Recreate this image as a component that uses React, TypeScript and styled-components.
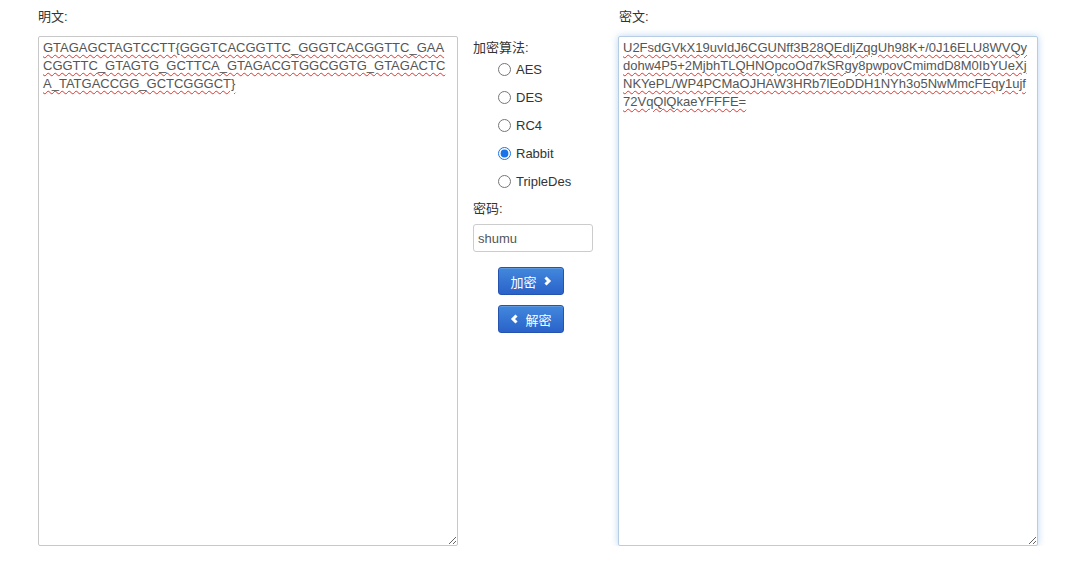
import React, { useState } from 'react';
import styled, { createGlobalStyle } from 'styled-components';

const GlobalStyle = createGlobalStyle`
  html, body {
    margin: 0;
    padding: 0;
    background: #fff;
  }
  body {
    font-family: "Liberation Sans", Arial, "Noto Sans CJK SC", sans-serif;
    font-size: 13px;
    color: #333;
  }
`;

const Page = styled.div`
  display: grid;
  grid-template-columns: 420px 130px 420px;
  column-gap: 15px;
  align-items: start;
  padding: 9px 0 0 38px;
`;

const Column = styled.div`
  display: flex;
  flex-direction: column;
`;

const Label = styled.label<{ $indent?: number }>`
  display: block;
  font-size: 13px;
  line-height: 15px;
  color: #333;
  margin: 0 0 12px ${({ $indent }) => $indent ?? 0}px;
`;

const TextBox = styled.textarea<{ $focused?: boolean }>`
  box-sizing: border-box;
  width: 420px;
  height: 510px;
  margin: 0;
  padding: 2px 4px;
  border: 1px solid ${({ $focused }) => ($focused ? '#b6cde3' : '#c8c8c8')};
  border-radius: 2px;
  font-family: "Liberation Sans", Arial, sans-serif;
  font-size: 13px;
  line-height: 18px;
  color: #555;
  background: #fff;
  outline: none;
  text-decoration: underline wavy #e2342c;
  text-decoration-thickness: 1.3px;
  text-underline-offset: 2px;
  box-shadow: ${({ $focused }) =>
    $focused ? '0 0 7px rgba(102, 160, 225, 0.45)' : 'none'};
`;

const Middle = styled.div`
  display: flex;
  flex-direction: column;
  padding-top: 31px;
`;

const SectionTitle = styled.div`
  font-size: 13px;
  line-height: 15px;
  color: #333;
`;

const RadioList = styled.div`
  display: flex;
  flex-direction: column;
  padding-left: 20px;
`;

const RadioRow = styled.label`
  display: flex;
  align-items: center;
  height: 28px;
  font-size: 13px;
  color: #333;
  cursor: pointer;

  input {
    width: 13px;
    height: 13px;
    margin: 0 5px 0 5px;
    accent-color: #1a73e8;
  }
`;

const KeyLabel = styled.div`
  font-size: 13px;
  line-height: 15px;
  color: #333;
  margin: 6px 0 8px;
`;

const KeyInput = styled.input`
  box-sizing: border-box;
  width: 120px;
  height: 28px;
  padding: 0 4px;
  border: 1px solid #ccc;
  border-radius: 3px;
  font-family: "Liberation Sans", Arial, sans-serif;
  font-size: 13px;
  color: #555;
  outline: none;
`;

const Buttons = styled.div`
  display: flex;
  flex-direction: column;
  gap: 10px;
  padding: 15px 0 0 25px;
`;

const Button = styled.button`
  box-sizing: border-box;
  display: flex;
  align-items: center;
  justify-content: center;
  gap: 6px;
  width: 66px;
  height: 28px;
  padding: 0;
  border: 1px solid #2553ae;
  border-radius: 3px;
  background: linear-gradient(to bottom, #4288dd 0%, #2a62c9 100%);
  color: #fff;
  font-family: "Liberation Sans", Arial, "Noto Sans CJK SC", sans-serif;
  font-size: 13px;
  cursor: pointer;
  box-shadow: inset 0 1px 0 rgba(255, 255, 255, 0.15);
`;

const Chevron = ({ dir }: { dir: 'left' | 'right' }) => (
  <svg width="9" height="10" viewBox="0 0 9 10">
    <polyline
      points={dir === 'right' ? '2.5,1.5 6,5 2.5,8.5' : '6.5,1.5 3,5 6.5,8.5'}
      fill="none"
      stroke="#fff"
      strokeWidth="3"
    />
  </svg>
);

const plain =
  'GTAGAGCTAGTCCTT{GGGTCACGGTTC_GGGTCACGGTTC_GAACGGTTC_GTAGTG_GCTTCA_GTAGACGTGGCGGTG_GTAGACTCA_TATGACCGG_GCTCGGGCT}';
const cipher =
  'U2FsdGVkX19uvIdJ6CGUNff3B28QEdljZqgUh98K+/0J16ELU8WVQydohw4P5+2MjbhTLQHNOpcoOd7kSRgy8pwpovCmimdD8M0IbYUeXjNKYePL/WP4PCMaOJHAW3HRb7lEoDDH1NYh3o5NwMmcFEqy1ujf72VqQlQkaeYFFFE=';

const algorithms = ['AES', 'DES', 'RC4', 'Rabbit', 'TripleDes'];

export default function App() {
  const [algo, setAlgo] = useState('Rabbit');
  const [key, setKey] = useState('shumu');
  const [left, setLeft] = useState(plain);
  const [right, setRight] = useState(cipher);

  return (
    <>
      <GlobalStyle />
      <Page>
        <Column>
          <Label>明文:</Label>
          <TextBox value={left} onChange={(e) => setLeft(e.target.value)} spellCheck={false} />
        </Column>
        <Middle>
          <SectionTitle>加密算法:</SectionTitle>
          <RadioList>
            {algorithms.map((a) => (
              <RadioRow key={a}>
                <input
                  type="radio"
                  name="algo"
                  checked={algo === a}
                  onChange={() => setAlgo(a)}
                />
                {a}
              </RadioRow>
            ))}
          </RadioList>
          <KeyLabel>密码:</KeyLabel>
          <KeyInput value={key} onChange={(e) => setKey(e.target.value)} />
          <Buttons>
            <Button>
              加密 <Chevron dir="right" />
            </Button>
            <Button>
              <Chevron dir="left" /> 解密
            </Button>
          </Buttons>
        </Middle>
        <Column>
          <Label $indent={1}>密文:</Label>
          <TextBox
            $focused
            value={right}
            onChange={(e) => setRight(e.target.value)}
            spellCheck={false}
          />
        </Column>
      </Page>
    </>
  );
}
